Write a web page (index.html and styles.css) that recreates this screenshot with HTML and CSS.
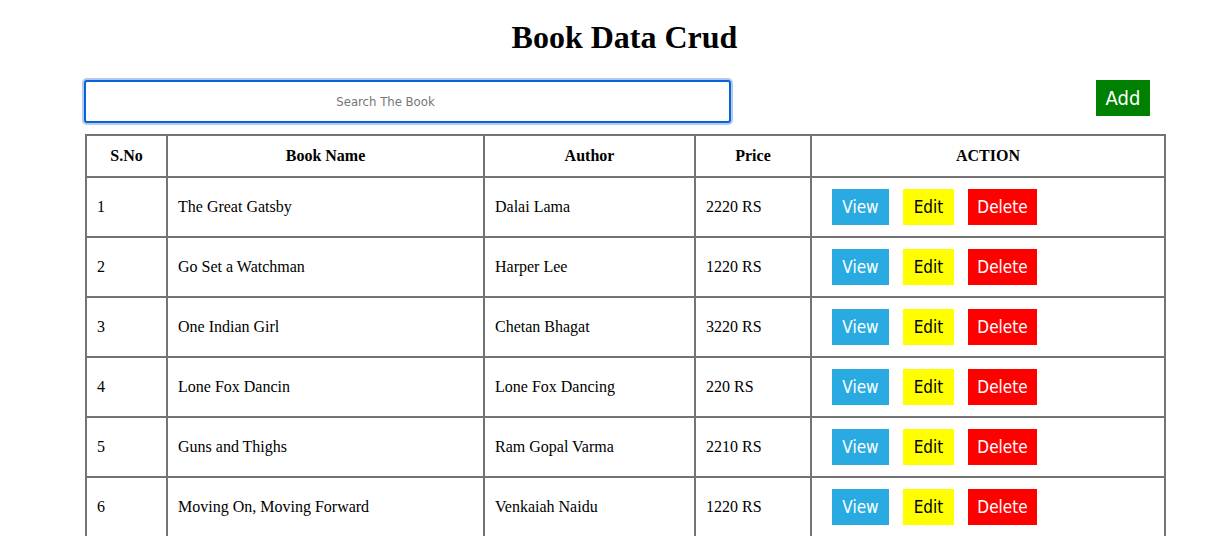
FILE: index.html
```html
<!DOCTYPE html>
<html>
<head>
<meta charset="utf-8">
<title>Book Data Crud</title>
<link rel="stylesheet" href="styles.css">
</head>
<body>
<div class="wrap">
  <h1 class="title">Book Data Crud</h1>
  <div class="toolbar">
    <input class="search" type="text" placeholder="Search The Book">
    <button class="btn btn-add">Add</button>
  </div>
  <table class="books">
    <colgroup>
      <col class="c1"><col class="c2"><col class="c3"><col class="c4"><col class="c5">
    </colgroup>
    <thead>
      <tr><th>S.No</th><th>Book Name</th><th>Author</th><th>Price</th><th>ACTION</th></tr>
    </thead>
    <tbody>
      <tr><td>1</td><td>The Great Gatsby</td><td>Dalai Lama</td><td>2220 RS</td><td class="act"><button class="btn btn-view">View</button><button class="btn btn-edit">Edit</button><button class="btn btn-del">Delete</button></td></tr>
      <tr><td>2</td><td>Go Set a Watchman</td><td>Harper Lee</td><td>1220 RS</td><td class="act"><button class="btn btn-view">View</button><button class="btn btn-edit">Edit</button><button class="btn btn-del">Delete</button></td></tr>
      <tr><td>3</td><td>One Indian Girl</td><td>Chetan Bhagat</td><td>3220 RS</td><td class="act"><button class="btn btn-view">View</button><button class="btn btn-edit">Edit</button><button class="btn btn-del">Delete</button></td></tr>
      <tr><td>4</td><td>Lone Fox Dancin</td><td>Lone Fox Dancing</td><td>220 RS</td><td class="act"><button class="btn btn-view">View</button><button class="btn btn-edit">Edit</button><button class="btn btn-del">Delete</button></td></tr>
      <tr><td>5</td><td>Guns and Thighs</td><td>Ram Gopal Varma</td><td>2210 RS</td><td class="act"><button class="btn btn-view">View</button><button class="btn btn-edit">Edit</button><button class="btn btn-del">Delete</button></td></tr>
      <tr><td>6</td><td>Moving On, Moving Forward</td><td>Venkaiah Naidu</td><td>1220 RS</td><td class="act"><button class="btn btn-view">View</button><button class="btn btn-edit">Edit</button><button class="btn btn-del">Delete</button></td></tr>
    </tbody>
  </table>
</div>
</body>
</html>
```

FILE: styles.css
```css
html, body {
  margin: 0;
  padding: 0;
  background: #fff;
  font-family: "Liberation Serif", "Times New Roman", serif;
  color: #000;
}
.wrap {
  margin-left: 85px;
  width: 1079px;
  padding-top: 19px;
}
.title {
  margin: 0;
  font-size: 32px;
  line-height: 37px;
  font-weight: bold;
  text-align: center;
}
.toolbar {
  margin-top: 24px;
  display: flex;
  align-items: flex-start;
  justify-content: space-between;
  margin-left: -1px;
}
.search {
  box-sizing: border-box;
  width: 647px;
  height: 43px;
  margin: 0;
  padding: 0 44px 0 0;
  border: 2px solid #0b63d8;
  border-radius: 3px;
  box-shadow: 0 0 0 2px #b3c9ee;
  outline: none;
  text-align: center;
  font-family: "DejaVu Sans Condensed", "DejaVu Sans", sans-serif;
  font-size: 13px;
  color: #333;
  background: #fff;
}
.search::placeholder {
  color: #767676;
}
.btn {
  border: none;
  margin: 0;
  padding: 0;
  font-family: "DejaVu Sans Condensed", "DejaVu Sans", sans-serif;
  font-size: 17px;
  height: 36px;
  cursor: pointer;
}
.btn-add {
  margin-top: 0;
  margin-right: 14px;
  width: 54px;
  height: 36px;
  background: #008000;
  color: #fff;
  font-size: 20px;
}
.books {
  margin-top: 11px;
  width: 1079px;
  border-collapse: collapse;
  table-layout: fixed;
}
.c1 { width: 81px; }
.c2 { width: 317px; }
.c3 { width: 211px; }
.c4 { width: 116px; }
.c5 { width: 354px; }
.books th, .books td {
  border: 2px solid #737373;
  font-size: 16px;
}
.books th {
  height: 40px;
  font-weight: bold;
  text-align: center;
  padding: 0;
}
.books td {
  height: 58px;
  padding: 0 10px;
  text-align: left;
}
.books td.act {
  padding: 0 0 0 20px;
}
.act .btn {
  margin-right: 14px;
  vertical-align: middle;
}
.btn-view {
  width: 57px;
  background: #29abe2;
  color: #fff;
}
.btn-edit {
  width: 51px;
  background: #ffff00;
  color: #000;
}
.btn-del {
  width: 69px;
  background: #ff0000;
  color: #fff;
}
```
